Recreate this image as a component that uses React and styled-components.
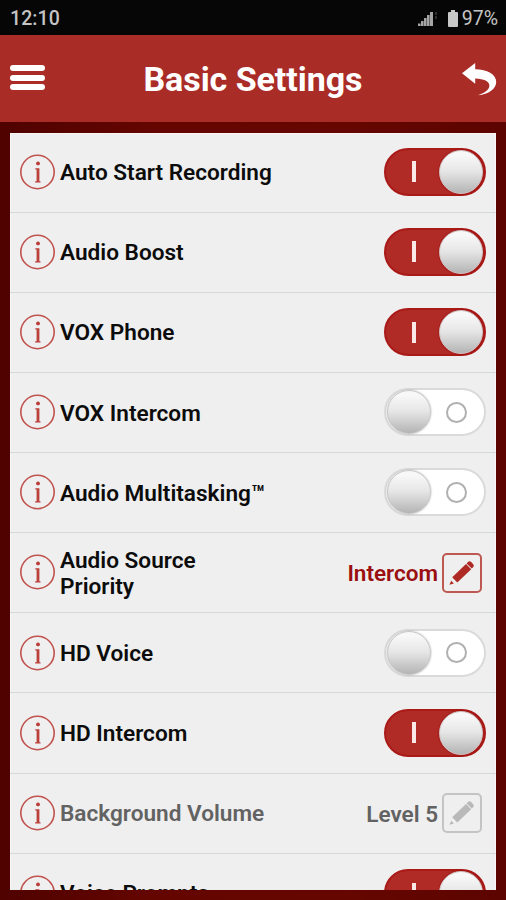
import React from 'react';
import styled, { createGlobalStyle, css } from 'styled-components';

const GlobalStyle = createGlobalStyle`
  * {
    box-sizing: border-box;
  }

  body {
    margin: 0;
    background: #5f0400;
    font-family: Roboto, 'Liberation Sans', sans-serif;
  }
`;

const Screen = styled.div`
  display: flex;
  flex-direction: column;
  height: 900px;
  overflow: hidden;
  background: linear-gradient(90deg, #4f0200, #640500 30%, #650600 70%, #5c0400);
`;

const StatusBar = styled.div`
  display: flex;
  align-items: center;
  height: 35px;
  padding: 1px 8px 0 10px;
  background: #060606;
  color: #c4c4c4;
  font-size: 19.5px;
  font-weight: 500;
`;

const Clock = styled.span`
  flex: 1;
  letter-spacing: 0.1px;
`;

const Battery = styled.span`
  font-size: 19.5px;
  font-weight: 450;
`;

const SignalIcon = styled.svg`
  margin-right: 10px;
`;

const BatteryIcon = styled.svg`
  margin-right: 4px;
`;

const Header = styled.header`
  display: flex;
  align-items: center;
  justify-content: space-between;
  height: 87px;
  padding: 0 9px 0 10px;
  background: #aa2c27;
  color: #fff;
`;

const Title = styled.h1`
  margin: 0;
  font-size: 34px;
  font-weight: 700;
  letter-spacing: -0.05px;
`;

const MenuButton = styled.div`
  display: flex;
  flex-direction: column;
  gap: 3.5px;
  width: 35px;
  margin-top: -2px;

  span {
    height: 6px;
    border-radius: 3px;
    background: #fff;
  }
`;

const List = styled.div`
  height: 757px;
  margin: 10.5px 10px 0;
  overflow: hidden;
  background: #efefef;
  box-shadow: inset 1px 1px 0 #fbf5f5, inset -1px 0 0 #fbf5f5;
`;

const Row = styled.div`
  display: flex;
  align-items: center;
  height: 80.15px;
  padding: 0 10px 0.6px;
  border-bottom: 1.5px solid #d8d8d8;
`;

const Label = styled.div`
  flex: 1;
  margin: 3.2px 0 0 5px;
  color: ${({ $muted }) => ($muted ? '#626262' : '#0c0c0c')};
  font-size: 22.6px;
  font-weight: 650;
  line-height: 26.5px;
  white-space: pre-line;
`;

const Value = styled.div`
  margin: 2px 4px 0 0;
  color: ${({ $muted }) => ($muted ? '#626262' : '#9a0f10')};
  font-size: 22.5px;
  font-weight: 650;
`;

const EditButton = styled.div`
  display: flex;
  align-items: center;
  justify-content: center;
  width: 40px;
  height: 40px;
  margin: 1px 4px 0 0;
  border: 2px solid ${({ $muted }) => ($muted ? '#c4c4c4' : '#bd5853')};
  border-radius: 5px;
  color: ${({ $muted }) => ($muted ? '#b9b9b9' : '#b02a25')};
`;

const Track = styled.div`
  display: flex;
  align-items: center;
  justify-content: space-between;
  width: 102px;
  height: 48px;
  border-radius: 24px;

  ${({ $on }) =>
    $on
      ? css`
          padding: 0 1px 0 26px;
          background: #b02a26;
          border: 2px solid #aa1a17;
        `
      : css`
          padding: 0 17px 0 1px;
          background: #fff;
          border: 2px solid #dadada;
        `}
`;

const Knob = styled.div`
  width: 44px;
  height: 44px;
  border-radius: 50%;
  background: linear-gradient(#f8f8f8 10%, #e6e6e6 48%, #b4b4b4);
  border: 1px solid ${({ $on }) => ($on ? '#d2c4c4' : '#c6c6c6')};
  box-shadow: 0 0 2px ${({ $on }) => ($on ? '#8c0705' : '#aaa')};
`;

const OnMark = styled.span`
  width: 4px;
  height: 21px;
  background: #fbe9e7;
`;

const OffMark = styled.span`
  width: 21px;
  height: 21px;
  border: 2.5px solid #b0b0b0;
  border-radius: 50%;
`;

const InfoIcon = () => (
  <svg width="35" height="36" viewBox="0 0 35 36" fill="none">
    <circle cx="17.5" cy="18" r="16.7" stroke="#c0534e" strokeWidth="1.6" />
    <circle cx="18" cy="9.4" r="1.9" fill="#b93b35" />
    <path d="M15.3 14.3h4.1V27.3h1.1v1.2h-5.4v-1.2h1.5V15.4h-1.3z" fill="#bb403a" />
  </svg>
);

const PencilIcon = () => (
  <svg width="28" height="28" viewBox="0 0 28 28" fill="currentColor">
    <path d="M20.2 2.8q1.5-1.2 3 .3l2 2.1q1.4 1.5.1 2.8l-1.5 1.6-5.2-5.2z" />
    <path d="M18 5l5.2 5.2L9.3 23.4 4.2 18.3z" />
    <path d="M3.2 21.8l2.7 2.6-4.4 1.4z" />
  </svg>
);

const BackIcon = () => (
  <svg width="36" height="34" viewBox="0 0 36 34" fill="#fff">
    <path d="M1 11.3L14.2 1v6.2C26 7.6 35.2 12 35.2 20c0 7-7.5 12.2-18.2 13.2 7-2.1 11.4-5.6 11.4-9.7 0-4-5.4-6.6-14.2-6.9v5.2z" />
  </svg>
);

const Toggle = ({ on }) => (
  <Track $on={on}>
    {on ? <OnMark /> : <Knob />}
    {on ? <Knob $on /> : <OffMark />}
  </Track>
);

const settings = [
  { label: 'Auto Start Recording', on: true },
  { label: 'Audio Boost', on: true },
  { label: 'VOX Phone', on: true },
  { label: 'VOX Intercom', on: false },
  { label: 'Audio Multitasking™', on: false },
  { label: 'Audio Source\nPriority', value: 'Intercom' },
  { label: 'HD Voice', on: false },
  { label: 'HD Intercom', on: true },
  { label: 'Background Volume', value: 'Level 5', muted: true },
  { label: 'Voice Prompts', on: true },
];

const App = () => (
  <>
    <GlobalStyle />
    <Screen>
      <StatusBar>
        <Clock>12:10</Clock>
        <SignalIcon width="20" height="17" viewBox="0 0 20 17" fill="#a5a5a5">
          <path d="M0 13.5h2.6V16H0zM3 11h2.6v5H3zM6 8h2.6v8H6zM9 5h2.6v11H9zM12 2h3v14h-3z" />
          <path d="M17.5 2h1v3h-1zM17.5 6h1v3h-1z" fill="#555" />
        </SignalIcon>
        <BatteryIcon width="10" height="17" viewBox="0 0 10 17" fill="#c8c8c8">
          <path d="M3 0h4v2h2q1 0 1 1v13q0 1-1 1H1q-1 0-1-1V3q0-1 1-1h2z" />
        </BatteryIcon>
        <Battery>97%</Battery>
      </StatusBar>
      <Header>
        <MenuButton>
          <span />
          <span />
          <span />
        </MenuButton>
        <Title>Basic Settings</Title>
        <BackIcon />
      </Header>
      <List>
        {settings.map(({ label, on, value, muted }) => (
          <Row key={label}>
            <InfoIcon />
            <Label $muted={muted}>{label}</Label>
            {value ? (
              <>
                <Value $muted={muted}>{value}</Value>
                <EditButton $muted={muted}>
                  <PencilIcon />
                </EditButton>
              </>
            ) : (
              <Toggle on={on} />
            )}
          </Row>
        ))}
      </List>
    </Screen>
  </>
);

export default App;
